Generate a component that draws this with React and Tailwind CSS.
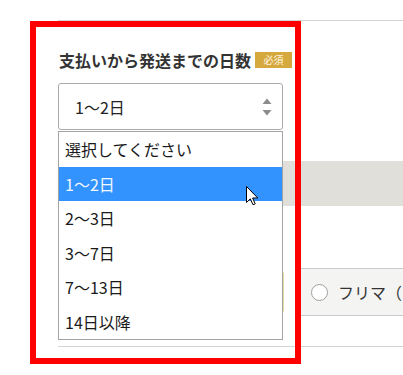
const options = ['選択してください', '1～2日', '2～3日', '3～7日', '7～13日', '14日以降'];

const App = () => {
    return (
        <div className="relative w-[403px] h-[375px] overflow-hidden bg-white font-['Noto_Sans_CJK_JP',sans-serif] text-[#222]">
            <div className="pt-[20px] pl-[58px]">
                <div className="border-t border-[#d4d4d4] pt-[29px]">
                    {/* label */}
                    <div className="flex items-center gap-[4px] h-[20px] pl-[1px]">
                        <span className="text-[16px] font-bold leading-[20px] text-[#333]">支払いから発送までの日数</span>
                        <span className="w-[37px] h-[16px] bg-[#d6a93e] text-[#fff6e0] text-[10px] leading-[16px] text-center">必須</span>
                    </div>

                    {/* select */}
                    <div className="mt-[13px] w-[225px] h-[47px] border border-[#ababab] rounded-[3px] flex items-center justify-between pl-[16px] pr-[10px]">
                        <span className="text-[16px] leading-[20px]">1～2日</span>
                        <svg width="10" height="18" viewBox="0 0 10 18">
                            <path d="M0.5 6 L5 0.5 L9.5 6 Z" fill="#8c8c8c" />
                            <path d="M0.5 12 L9.5 12 L5 17.5 Z" fill="#8c8c8c" />
                        </svg>
                    </div>

                    {/* row behind the list */}
                    <div className="mt-[31px] h-[45px] bg-[#e0dfda]"></div>

                    <div className="mt-[62px] flex items-center">
                        <div className="w-[226px] shrink-0 h-[42px] border border-[#e2dba0] rounded-[3px]"></div>
                        <div className="ml-[13px] flex-1 min-w-0 overflow-hidden h-[48px] bg-[#f4f4f2] border-y border-[#c9c9c9] flex items-center pl-[14px]">
                            <span className="w-[17px] h-[17px] rounded-full border border-[#a0a0a0] bg-white shrink-0"></span>
                            <span className="ml-[10px] text-[16px] leading-[20px] text-[#333] whitespace-nowrap">フリマ（スマホアプリ）</span>
                        </div>
                    </div>

                    <div className="mt-[30px] border-t border-[#d4d4d4]"></div>
                </div>
            </div>

            {/* open dropdown list */}
            <div className="absolute left-[58px] top-[131px] w-[225px] border border-[#a3a3a3] bg-white">
                {options.map((opt, i) => (
                    <div
                        key={opt}
                        className={i === 1
                            ? 'h-[34.5px] flex items-center pl-[6px] text-[16px] bg-[#3393fe] text-[#f2f8ff]'
                            : 'h-[34.5px] flex items-center pl-[6px] text-[16px] text-[#1a1a1a]'}
                    >
                        {opt}
                    </div>
                ))}
            </div>

            {/* mouse cursor */}
            <svg className="absolute left-[246px] top-[186px]" width="13" height="20" viewBox="0 0 13 20">
                <path d="M0.5 0.5 L0.5 16.5 L4.3 12.8 L7 18.8 L9.2 17.8 L6.6 12 L11.8 12 Z" fill="#fff" stroke="#000" strokeWidth="1" strokeLinejoin="round" />
            </svg>

            {/* red annotation frame */}
            <div className="absolute left-[30px] top-[21px] w-[271px] h-[343px] border-[6px] border-[#fe0000] pointer-events-none"></div>
        </div>
    )
}

export default App;
